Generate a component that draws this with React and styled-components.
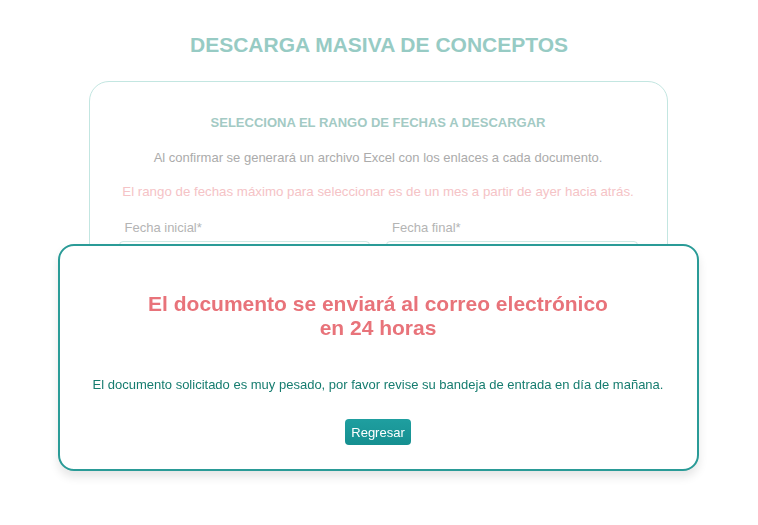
import React from 'react'
import styled, { createGlobalStyle } from 'styled-components'

const GlobalStyle = createGlobalStyle`
    body {
        margin: 0;
        background: #ffffff;
        font-family: "Liberation Sans", Arial, sans-serif;
    }
`

const Page = styled.div`
    padding-top: 33px;
    display: flex;
    flex-direction: column;
    align-items: center;
`

const PageTitle = styled.h1`
    margin: 0 0 24px;
    font-size: 21px;
    line-height: 24px;
    font-weight: bold;
    color: #97cbc4;
`

const Card = styled.div`
    box-sizing: border-box;
    width: 579px;
    height: 384px;
    margin-right: 2px;
    border: 1px solid #c3e6e1;
    border-radius: 20px;
    padding: 33px 29px 0 29px;
    text-align: center;
`

const CardTitle = styled.h2`
    margin: 0;
    font-size: 13px;
    line-height: 16px;
    font-weight: bold;
    color: #a3cac4;
`

const Text = styled.p`
    margin: ${p => p.top}px 0 0;
    font-size: ${p => (p.warn ? '13.3px' : '13px')};
    line-height: 16px;
    color: ${p => (p.warn ? '#f5c3c6' : '#ababab')};
`

const Fields = styled.div`
    margin-top: 20px;
    display: grid;
    grid-template-columns: 1fr 1fr;
    gap: 16px;
    text-align: left;
`

const Field = styled.label`
    display: flex;
    flex-direction: column;
    gap: 5px;
`

const Label = styled.span`
    font-size: 13px;
    line-height: 16px;
    color: #b4b4b4;
    padding-left: 6px;
`

const Input = styled.div`
    height: 34px;
    border: 1px solid #cde8e4;
    border-radius: 4px;
`

const Overlay = styled.div`
    position: fixed;
    inset: 0;
    display: flex;
    justify-content: center;
    align-items: flex-start;
    padding-top: 244px;
`

const Modal = styled.div`
    box-sizing: border-box;
    width: 641px;
    height: 227px;
    margin-right: 2px;
    background: #ffffff;
    border: 2px solid #2a9b97;
    border-radius: 16px;
    box-shadow: 0 6px 10px rgba(0, 0, 0, 0.1);
    padding-top: 46px;
    display: flex;
    flex-direction: column;
    align-items: center;
    text-align: center;
`

const ModalTitle = styled.h3`
    margin: 0;
    font-size: 21px;
    line-height: 24px;
    font-weight: bold;
    color: #e8737a;
`

const ModalText = styled.p`
    margin: 37px 0 0;
    font-size: 13px;
    line-height: 16px;
    color: #157c6f;
`

const Button = styled.button`
    margin-top: 26px;
    height: 26px;
    padding: 0 6px;
    border: none;
    border-radius: 4px;
    background: linear-gradient(180deg, #1f9fa0, #158f90);
    color: #ffffff;
    font-family: "Liberation Sans", Arial, sans-serif;
    font-size: 13px;
    cursor: pointer;
`

const App = () => {
    return (
        <>
            <GlobalStyle />
            <Page>
                <PageTitle>DESCARGA MASIVA DE CONCEPTOS</PageTitle>
                <Card>
                    <CardTitle>SELECCIONA EL RANGO DE FECHAS A DESCARGAR</CardTitle>
                    <Text top={19}>Al confirmar se generará un archivo Excel con los enlaces a cada documento.</Text>
                    <Text top={18} warn>El rango de fechas máximo para seleccionar es de un mes a partir de ayer hacia atrás.</Text>
                    <Fields>
                        <Field>
                            <Label>Fecha inicial*</Label>
                            <Input />
                        </Field>
                        <Field>
                            <Label>Fecha final*</Label>
                            <Input />
                        </Field>
                    </Fields>
                </Card>
            </Page>
            <Overlay>
                <Modal>
                    <ModalTitle>El documento se enviará al correo electrónico<br />en 24 horas</ModalTitle>
                    <ModalText>El documento solicitado es muy pesado, por favor revise su bandeja de entrada en día de mañana.</ModalText>
                    <Button>Regresar</Button>
                </Modal>
            </Overlay>
        </>
    )
}

export default App
